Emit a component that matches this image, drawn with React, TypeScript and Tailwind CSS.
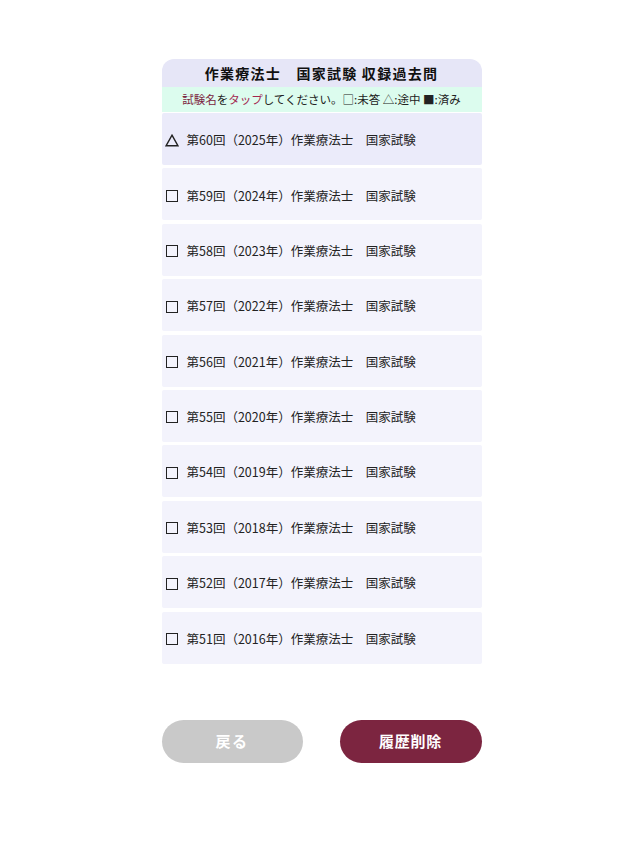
import React from "react";

const exams = [
  { no: 60, year: 2025, status: "progress" },
  { no: 59, year: 2024, status: "none" },
  { no: 58, year: 2023, status: "none" },
  { no: 57, year: 2022, status: "none" },
  { no: 56, year: 2021, status: "none" },
  { no: 55, year: 2020, status: "none" },
  { no: 54, year: 2019, status: "none" },
  { no: 53, year: 2018, status: "none" },
  { no: 52, year: 2017, status: "none" },
  { no: 51, year: 2016, status: "none" },
];

const font = { fontFamily: '"Noto Sans CJK JP", "Noto Sans", sans-serif' };

const StatusIcon = ({ status }: { status: string }) =>
  status === "progress" ? (
    <svg width="14" height="13" viewBox="0 0 14 13" className="shrink-0">
      <path d="M7 1.2 L13 11.8 L1 11.8 Z" fill="none" stroke="#222" strokeWidth="1.4" strokeLinejoin="miter" />
    </svg>
  ) : (
    <span className="w-[12px] h-[12px] border-[1.5px] border-[#222] shrink-0 ml-[1px] mr-[1px]" />
  );

export default function App() {
  return (
    <div className="min-h-[858px] bg-white text-[#222]" style={font}>
      <div className="mx-auto w-[320px] pt-[59px]">
        {/* Header */}
        <div className="h-[28px] rounded-t-[12px] bg-[#e6e6f7] flex items-center justify-center text-[14px] font-bold tracking-[0.09em] text-[#111]">
          作業療法士　国家試験 収録過去問
        </div>
        <div className="h-[25px] bg-[#dcfcee] flex items-center justify-center text-[11.5px] text-[#222]">
          <span className="text-[#7b2540]">試験名</span>を
          <span className="text-[#a3264f]">タップ</span>してください。□:未答 △:途中 ■:済み
        </div>

        {/* List */}
        <div className="flex flex-col gap-[3.4px] mt-[1px]">
          {exams.map((e) => (
            <button
              key={e.no}
              className={`h-[52px] w-full flex items-center text-left pl-[3px] pt-[3px] rounded-[2px] ${
                e.status === "progress" ? "bg-[#ebebfa]" : "bg-[#f3f3fc]"
              }`}
            >
              <StatusIcon status={e.status} />
              <span className="ml-[8px] text-[12.5px] text-[#222]">
                第{e.no}回（{e.year}年）作業療法士　国家試験
              </span>
            </button>
          ))}
        </div>

        {/* Buttons */}
        <div className="mt-[56px] flex justify-between">
          <button className="w-[141px] h-[43px] rounded-full bg-[#c9c9c9] text-white text-[15px] font-bold tracking-[0.1em]">
            戻る
          </button>
          <button className="w-[142px] h-[43px] rounded-full bg-[#7c2540] text-white text-[15px] font-bold tracking-[0.05em]">
            履歴削除
          </button>
        </div>
      </div>
    </div>
  );
}
